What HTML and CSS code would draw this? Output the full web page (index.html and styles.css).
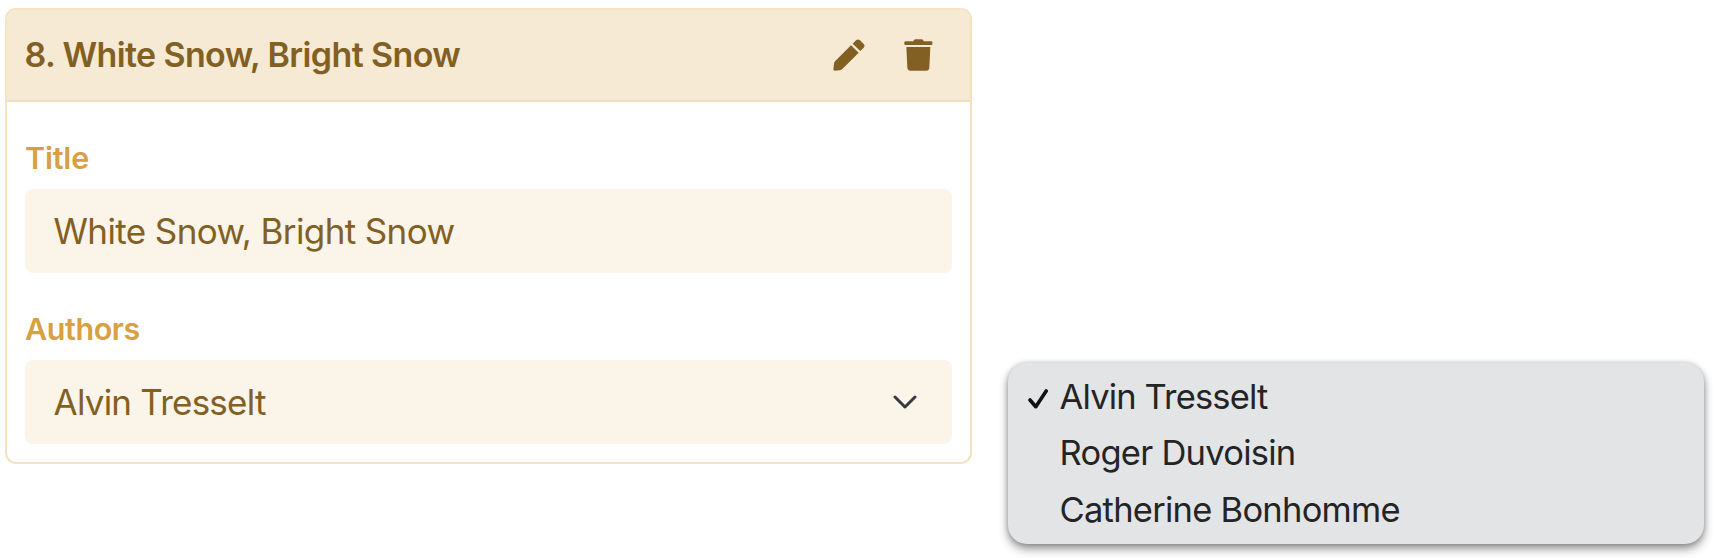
FILE: index.html
```html
<!DOCTYPE html>
<html lang="en">
<head>
<meta charset="utf-8">
<title>White Snow, Bright Snow</title>
<link rel="stylesheet" href="styles.css">
</head>
<body>
<main class="page">
  <section class="card">
    <header class="card-header">
      <h2 class="card-title">8. White Snow, Bright Snow</h2>
      <div class="actions">
        <svg class="icon" viewBox="0 0 96 96"><path d="M54 19 77 41 28 90Q25 93 20 94L5 95Q1 95 1 91L3 75Q3 70 6 67ZM59 14 69 4Q75-1 81 4L92 15Q97 20 92 26L82 36Z"/></svg>
        <svg class="icon" viewBox="0 0 96 96"><path d="M10 7H34Q36 1 40 1H59Q63 1 65 7H88Q91 7 91 10V15Q91 18 88 18H10Q7 18 7 15V10Q7 7 10 7ZM13 24H85L82 86Q81 95 73 95H25Q17 95 16 86Z"/></svg>
      </div>
    </header>
    <div class="card-body">
      <div class="field">
        <span class="label label-title">Title</span>
        <div class="control control-title"><span>White Snow, Bright Snow</span></div>
      </div>
      <div class="field">
        <span class="label label-authors">Authors</span>
        <div class="control control-author">
          <span>Alvin Tresselt</span>
          <svg class="chevron" viewBox="0 0 24 14"><path d="M2 2 12 12 22 2"/></svg>
        </div>
      </div>
    </div>
  </section>
  <ul class="menu">
    <li class="option option-a"><svg class="check" viewBox="0 0 20 20"><path d="M2 11 7.8 17.7 18.2 2"/></svg><span>Alvin Tresselt</span></li>
    <li class="option option-b"><span>Roger Duvoisin</span></li>
    <li class="option option-c"><span>Catherine Bonhomme</span></li>
  </ul>
</main>
</body>
</html>
```
FILE: styles.css
```css
* { box-sizing: border-box; }
body { margin: 0; background: #fff; font-family: Inter, "Liberation Sans", sans-serif; }
.page { display: flex; align-items: flex-start; gap: 36px; height: 558px; padding: 8px 0 0 5px; overflow: hidden; }
.card { width: 967px; height: 456px; border: 2px solid #f5e2c0; border-radius: 11px; background: #fff; overflow: hidden; }
.card-header { display: flex; align-items: center; justify-content: space-between; height: 92px; padding: 0 36.5px 0 17.5px; background: #f7ead5; border-bottom: 2px solid #f5e0bd; }
.card-title { margin: 0; font-size: 34px; line-height: 40px; padding-bottom: 1px; font-weight: 600; letter-spacing: -0.62px; color: #826024; white-space: nowrap; }
.actions { display: flex; gap: 36.5px; }
.icon { width: 32px; height: 32px; fill: #826024; }
.card-body { padding: 33px 18px 18px; display: flex; flex-direction: column; gap: 33px; }
.field { display: flex; flex-direction: column; align-items: stretch; gap: 8px; }
.label { height: 46px; line-height: 45px; font-size: 30.5px; font-weight: 600; color: #d9a042; letter-spacing: -0.42px; }
.label-title { letter-spacing: -0.2px; }
.control { display: flex; align-items: center; justify-content: space-between; height: 84px; padding: 0 35px 0 28.5px; border-radius: 8px; background: #fbf4e8; color: #826024; font-size: 35px; font-weight: 400; letter-spacing: -0.62px; }
.control-author { letter-spacing: -0.77px; }
.chevron { width: 24px; height: 14px; fill: none; stroke: #343a40; stroke-width: 3; stroke-linecap: round; stroke-linejoin: round; }
.menu { list-style: none; width: 696px; height: 181px; margin: 355px 0 0; padding: 5px 0 0 20px; border-radius: 19px; background: #e3e4e6; box-shadow: 0 5px 10px rgba(0,0,0,.42), 0 0 5px rgba(0,0,0,.2); color: #242424; font-size: 34.5px; letter-spacing: -0.74px; font-weight: 400; }
.option { display: flex; align-items: center; height: 56.5px; padding-left: 31.5px; white-space: nowrap; }
.option-a { padding-left: 0; gap: 11.5px; letter-spacing: -0.84px; }
.check { width: 20px; height: 20px; margin-top: 5px; fill: none; stroke: #111; stroke-width: 3.6; stroke-linecap: round; stroke-linejoin: round; }
```
